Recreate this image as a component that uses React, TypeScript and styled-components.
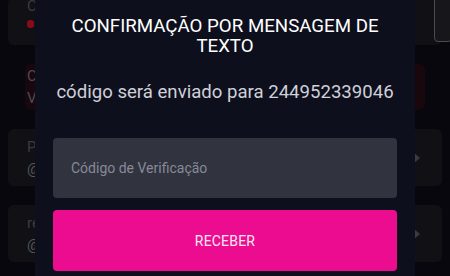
import React from "react";
import styled, { createGlobalStyle } from "styled-components";

const Global = createGlobalStyle`
  html, body { margin: 0; padding: 0; background: #07070d; overflow: hidden; }
  body { font-family: Roboto, "Noto Sans", sans-serif; }
`;

const Page = styled.div`
  position: relative;
  width: 450px;
  height: 276px;
  overflow: hidden;
  background: #07070d;
`;

const List = styled.div`
  display: flex;
  flex-direction: column;
  gap: 19px;
  padding: 0 8px;
  margin-top: -2px;
`;

const Card = styled.div<{ $tone?: "red" | "dark"; $inset?: number; $h: number; $top?: boolean }>`
  position: relative;
  height: ${(p) => p.$h}px;
  margin: 0 ${(p) => p.$inset ?? 0}px;
  border-radius: 6px;
  background: ${(p) => (p.$tone === "red" ? "#19070e" : "#111115")};
  display: flex;
  flex-direction: column;
  justify-content: ${(p) => (p.$top ? "flex-start" : "center")};
  gap: 6px;
  padding: 0 ${(p) => 19 - (p.$inset ?? 0)}px;
  color: #3a3a44;
  font-size: 15px;
`;

const CardLine = styled.div<{ $color?: string }>`
  color: ${(p) => p.$color ?? "#3b3b44"};
  line-height: 16px;
`;

const Dot = styled.div`
  width: 7px;
  height: 8px;
  border-radius: 3px;
  background: #850d1b;
`;

const Play = styled.div`
  position: absolute;
  right: 22px;
  top: 50%;
  transform: translateY(-50%);
  width: 0;
  height: 0;
  border-top: 6px solid transparent;
  border-bottom: 6px solid transparent;
  border-left: 7px solid #3a3a40;
`;

const EdgeBox = styled.div`
  position: absolute;
  right: -10px;
  top: -10px;
  width: 16px;
  height: 52px;
  border: 1px solid #4a4a50;
  border-radius: 4px;
  background: #17171b;
`;

const Modal = styled.div`
  position: absolute;
  top: 0;
  left: 35px;
  width: 380px;
  bottom: -20px;
  background: #0e0f1d;
  display: flex;
  flex-direction: column;
  align-items: stretch;
  padding: 16px 18px 0;
  box-sizing: border-box;
`;

const Title = styled.h2`
  margin: 0;
  font-weight: 400;
  font-size: 18.7px;
  line-height: 20px;
  color: #ffffff;
  text-align: center;
  padding: 0 2px;
`;

const Subtitle = styled.p`
  margin: 26px 0 0;
  font-size: 18.6px;
  line-height: 20px;
  color: #cfd0d8;
  text-align: center;
  white-space: nowrap;
`;

const Input = styled.input`
  margin-top: 36px;
  height: 60px;
  border: none;
  border-radius: 4px;
  background: #31333f;
  padding: 0 18px;
  font-family: Roboto, sans-serif;
  font-size: 14px;
  color: #fff;
  outline: none;
  &::placeholder { color: #878a98; }
`;

const Button = styled.button`
  margin-top: 12px;
  height: 61px;
  border: none;
  border-radius: 4px;
  background: #ec0c8f;
  color: #fde8f3;
  font-family: Roboto, sans-serif;
  font-size: 14px;
  letter-spacing: 0.2px;
`;

export default function App() {
  return (
    <Page>
      <Global />
      <List>
        <Card $h={47} $top>
          <CardLine>C</CardLine>
          <Dot />
          <EdgeBox />
        </Card>
        <Card $h={46} $tone="red" $inset={17}>
          <CardLine $color="#4a4a58">C</CardLine>
          <CardLine $color="#4a4a58">V</CardLine>
        </Card>
        <Card $h={57}>
          <CardLine>P</CardLine>
          <CardLine $color="#55555c">@</CardLine>
          <Play />
        </Card>
        <Card $h={57}>
          <CardLine>re</CardLine>
          <CardLine $color="#55555c">@</CardLine>
          <Play />
        </Card>
      </List>
      <Modal>
        <Title>CONFIRMAÇÃO POR MENSAGEM DE TEXTO</Title>
        <Subtitle>código será enviado para 244952339046</Subtitle>
        <Input placeholder="Código de Verificação" />
        <Button>RECEBER</Button>
      </Modal>
    </Page>
  );
}
